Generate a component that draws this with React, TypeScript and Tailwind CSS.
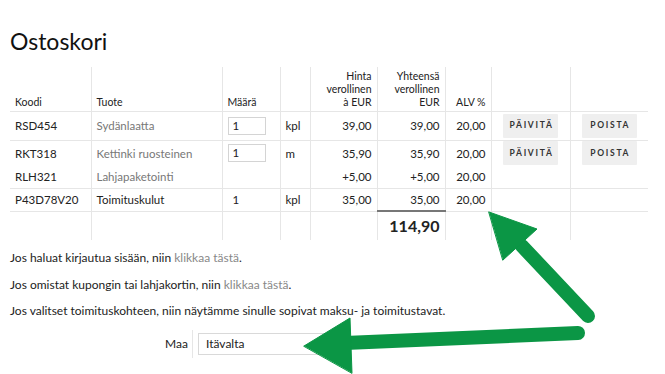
const font = { fontFamily: 'Lato, "Liberation Sans", sans-serif' }

type Row = {
  code: string
  name: string
  qty?: string
  input?: boolean
  unit?: string
  price: string
  total: string
  vat: string
  buttons?: boolean
  dark?: boolean
  h: string
  border?: boolean
}

const rows: Row[] = [
  { code: 'RSD454', name: 'Sydänlaatta', input: true, qty: '1', unit: 'kpl', price: '39,00', total: '39,00', vat: '20,00', buttons: true, h: 'h-[29px]', border: true },
  { code: 'RKT318', name: 'Kettinki ruosteinen', input: true, qty: '1', unit: 'm', price: '35,90', total: '35,90', vat: '20,00', buttons: true, h: 'h-[26px]' },
  { code: 'RLH321', name: 'Lahjapaketointi', price: '+5,00', total: '+5,00', vat: '20,00', h: 'h-[22px]', border: true },
  { code: 'P43D78V20', name: 'Toimituskulut', qty: '1', unit: 'kpl', price: '35,00', total: '35,00', vat: '20,00', dark: true, h: 'h-[23px]', border: true },
]

const line = 'border-r border-[#e6e6e6] px-[5px]'
const cell = `${line} align-middle`
const head = `${line} align-bottom pb-[2px] font-normal`
const btn =
  'w-[55px] pl-[2px] bg-[#efefef] text-[#333] text-[8.5px] font-bold tracking-[0.2em] h-[24px] rounded-[1px]'

function Arrows() {
  return (
    <svg className="absolute left-0 top-0 pointer-events-none" width="665" height="374">
      <g fill="#0b9645" stroke="#0b9645" strokeLinecap="round" strokeLinejoin="round">
        <line x1="588" y1="316" x2="522" y2="246" strokeWidth="14" />
        <polygon points="489,212 537,229 503,260" strokeWidth="1" />
        <line x1="578" y1="333" x2="345" y2="343" strokeWidth="14" />
        <polygon points="304,346 350,318 352,373" strokeWidth="1" />
      </g>
    </svg>
  )
}

export default function App() {
  return (
    <div className="relative w-[665px] h-[374px] overflow-hidden bg-white text-[#222]" style={font}>
      <div className="px-[10px] pt-[27px]">
        <h1 className="text-[23px] leading-[28px] font-normal text-[#111]">Ostoskori</h1>

        <table className="mt-[12px] w-[638px] table-fixed border-collapse text-[11.5px]">
          <colgroup>
            <col className="w-[81px]" />
            <col className="w-[131px]" />
            <col className="w-[58px]" />
            <col className="w-[30px]" />
            <col className="w-[67px]" />
            <col className="w-[68px]" />
            <col className="w-[46px]" />
            <col className="w-[79px]" />
            <col className="w-[78px]" />
          </colgroup>
          <thead>
            <tr className="h-[44px] border-b border-[#e6e6e6] text-[10.5px] leading-[13px]">
              <th className={`${head} text-left`}>Koodi</th>
              <th className={`${head} text-left`}>Tuote</th>
              <th className={`${head} text-left`}>Määrä</th>
              <th className={head}></th>
              <th className={`${head} text-right`}>
                Hinta
                <br />
                verollinen
                <br />à EUR
              </th>
              <th className={`${head} text-right`}>
                Yhteensä
                <br />
                verollinen
                <br />
                EUR
              </th>
              <th className={`${head} text-right`}>ALV %</th>
              <th className={head}></th>
              <th className="px-[5px]"></th>
            </tr>
          </thead>
          <tbody>
            {rows.map((r) => (
              <tr key={r.code} className={`${r.h} ${r.border ? 'border-b border-[#e6e6e6]' : ''}`}>
                <td className={cell}>{r.code}</td>
                <td className={`${cell} ${r.dark ? 'text-[#222]' : 'text-[#777]'}`}>{r.name}</td>
                <td className={cell}>
                  {r.input ? (
                    <div className="w-[38px] h-[18px] border border-[#d4d4d4] pl-[4px] leading-[16px]">{r.qty}</div>
                  ) : (
                    <span className="pl-[5px]">{r.qty}</span>
                  )}
                </td>
                <td className={cell}>{r.unit}</td>
                <td className={`${cell} text-right`}>{r.price}</td>
                <td className={`${cell} text-right`}>{r.total}</td>
                <td className={`${cell} text-right`}>{r.vat}</td>
                <td className={`${cell} text-center`}>{r.buttons && <button className={btn}>PÄIVITÄ</button>}</td>
                <td className="px-[5px] text-center align-middle">{r.buttons && <button className={btn}>POISTA</button>}</td>
              </tr>
            ))}
            <tr className="h-[29px]">
              <td className={cell}></td>
              <td className={cell}></td>
              <td className={cell}></td>
              <td className={cell}></td>
              <td className={cell}></td>
              <td className={`${cell} border-t-2 border-t-[#777] text-right text-[16px] font-bold`}>114,90</td>
              <td className={cell}></td>
              <td className={cell}></td>
              <td></td>
            </tr>
          </tbody>
        </table>

        <div className="mt-[9px] text-[12px] leading-[18px] flex flex-col gap-[8.5px]">
          <p>
            Jos haluat kirjautua sisään, niin <span className="text-[#888]">klikkaa tästä</span>.
          </p>
          <p>
            Jos omistat kupongin tai lahjakortin, niin <span className="text-[#888]">klikkaa tästä</span>.
          </p>
          <p>Jos valitset toimituskohteen, niin näytämme sinulle sopivat maksu- ja toimitustavat.</p>
        </div>

        <div className="mt-[10px] flex items-center text-[12px]">
          <div className="w-[183px] h-[28px] border-r border-[#e6e6e6] text-right pr-[4px] leading-[28px]">Maa</div>
          <div className="ml-[5px] w-[130px] h-[22px] border border-[#d9d9d9] pl-[7px] leading-[20px]">Itävalta</div>
        </div>
      </div>
      <Arrows />
    </div>
  )
}
